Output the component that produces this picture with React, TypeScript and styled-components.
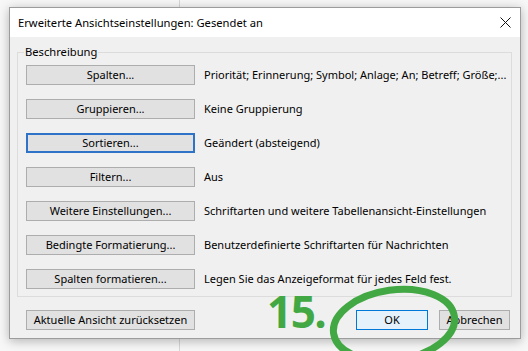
import React from "react";
import styled, { createGlobalStyle, css } from "styled-components";

const GlobalStyle = createGlobalStyle`
  html, body { margin: 0; padding: 0; background: #f7f7f7; }
  * { box-sizing: border-box; }
`;

const UI_FONT = `"Noto Sans", "Open Sans", "Liberation Sans", sans-serif`;

const Desktop = styled.div`
  position: relative;
  width: 528px;
  height: 351px;
  overflow: hidden;
  padding: 7px 0 0 9px;
  background:
    linear-gradient(to right, transparent 179px, #d6d6d6 179px, #d6d6d6 180px, transparent 180px),
    #f7f7f7;
  font-family: ${UI_FONT};
  font-size: 11px;
  color: #000;
`;

const Dialog = styled.div`
  width: 512px;
  height: 332px;
  border: 1px solid #9c9c9c;
  box-shadow: 0 2px 10px rgba(0, 0, 0, 0.28);
  display: flex;
  flex-direction: column;
  background: #f0f0f0;
`;

const TitleBar = styled.div`
  height: 29px;
  background: #ffffff;
  display: flex;
  align-items: center;
  justify-content: space-between;
  padding-left: 8px;
`;

const Title = styled.span`
  font-size: 11.2px;
  line-height: 16px;
`;

const CloseButton = styled.div`
  width: 30px;
  height: 29px;
  display: flex;
  align-items: center;
  justify-content: center;
`;

const Body = styled.div`
  flex: 1;
  padding: 7px 8px 8px 7px;
  display: flex;
  flex-direction: column;
`;

const Group = styled.fieldset`
  margin: 0;
  border: 1px solid #dcdcdc;
  padding: 5px 0 7px 8px;
  min-inline-size: 0;
`;

const Legend = styled.legend`
  padding: 0 1px;
  margin-left: -2px;
  font-size: 11.2px;
  line-height: 16px;
`;

const Rows = styled.div`
  display: flex;
  flex-direction: column;
  gap: 14px;
`;

const Row = styled.div`
  display: flex;
  align-items: center;
  gap: 9px;
`;

const Desc = styled.span`
  white-space: nowrap;
  line-height: 16px;
  font-size: 11px;
`;

const Button = styled.button<{ $variant?: "normal" | "focus" | "default"; $width?: number }>`
  width: ${(p) => p.$width ?? 169}px;
  height: 20px;
  padding: 0;
  font-family: ${UI_FONT};
  font-size: 11px;
  line-height: 16px;
  color: #000;
  white-space: nowrap;
  border: 1px solid #adadad;
  background: #e1e1e1;
  flex: none;
  ${(p) =>
    p.$variant === "focus" &&
    css`
      border: 2px solid #2e73c8;
    `}
  ${(p) =>
    p.$variant === "default" &&
    css`
      border: 1px solid #0078d7;
      background: #e5f1fb;
    `}
`;

const Footer = styled.div`
  margin-top: 13px;
  padding: 0 2px 0 9px;
  display: flex;
  justify-content: space-between;
  align-items: center;
`;

const FooterRight = styled.div`
  display: flex;
  gap: 11px;
`;

const StepLabel = styled.div`
  position: absolute;
  left: 267px;
  top: 289px;
  font-family: "Open Sans", "Liberation Sans", sans-serif;
  font-weight: 700;
  font-size: 44px;
  line-height: 1;
  color: #41a843;
  letter-spacing: -1.5px;
`;

const Overlay = styled.svg`
  position: absolute;
  left: 0;
  top: 0;
  pointer-events: none;
`;

const rows: { label: string; desc: string; focus?: boolean }[] = [
  { label: "Spalten...", desc: "Priorität; Erinnerung; Symbol; Anlage; An; Betreff; Größe;..." },
  { label: "Gruppieren...", desc: "Keine Gruppierung" },
  { label: "Sortieren...", desc: "Geändert (absteigend)", focus: true },
  { label: "Filtern...", desc: "Aus" },
  { label: "Weitere Einstellungen...", desc: "Schriftarten und weitere Tabellenansicht-Einstellungen" },
  { label: "Bedingte Formatierung...", desc: "Benutzerdefinierte Schriftarten für Nachrichten" },
  { label: "Spalten formatieren...", desc: "Legen Sie das Anzeigeformat für jedes Feld fest." },
];

export default function App() {
  return (
    <>
      <GlobalStyle />
      <Desktop>
        <Dialog>
          <TitleBar>
            <Title>Erweiterte Ansichtseinstellungen: Gesendet an</Title>
            <CloseButton>
              <svg width="11" height="11" viewBox="0 0 11 11">
                <path d="M0.5 0.5 L10.5 10.5 M10.5 0.5 L0.5 10.5" stroke="#111" strokeWidth="1" fill="none" />
              </svg>
            </CloseButton>
          </TitleBar>
          <Body>
            <Group>
              <Legend>Beschreibung</Legend>
              <Rows>
                {rows.map((r) => (
                  <Row key={r.label}>
                    <Button $variant={r.focus ? "focus" : "normal"}>{r.label}</Button>
                    <Desc>{r.desc}</Desc>
                  </Row>
                ))}
              </Rows>
            </Group>
            <Footer>
              <Button>Aktuelle Ansicht zurücksetzen</Button>
              <FooterRight>
                <Button $variant="default" $width={72}>OK</Button>
                <Button $width={71}>Abbrechen</Button>
              </FooterRight>
            </Footer>
          </Body>
        </Dialog>
        <StepLabel>15.</StepLabel>
        <Overlay width="528" height="351" viewBox="0 0 528 351">
          <ellipse
            cx="394"
            cy="325"
            rx="61"
            ry="35"
            transform="rotate(-8 394 325)"
            fill="none"
            stroke="#41a843"
            strokeWidth="7"
          />
        </Overlay>
      </Desktop>
    </>
  );
}
